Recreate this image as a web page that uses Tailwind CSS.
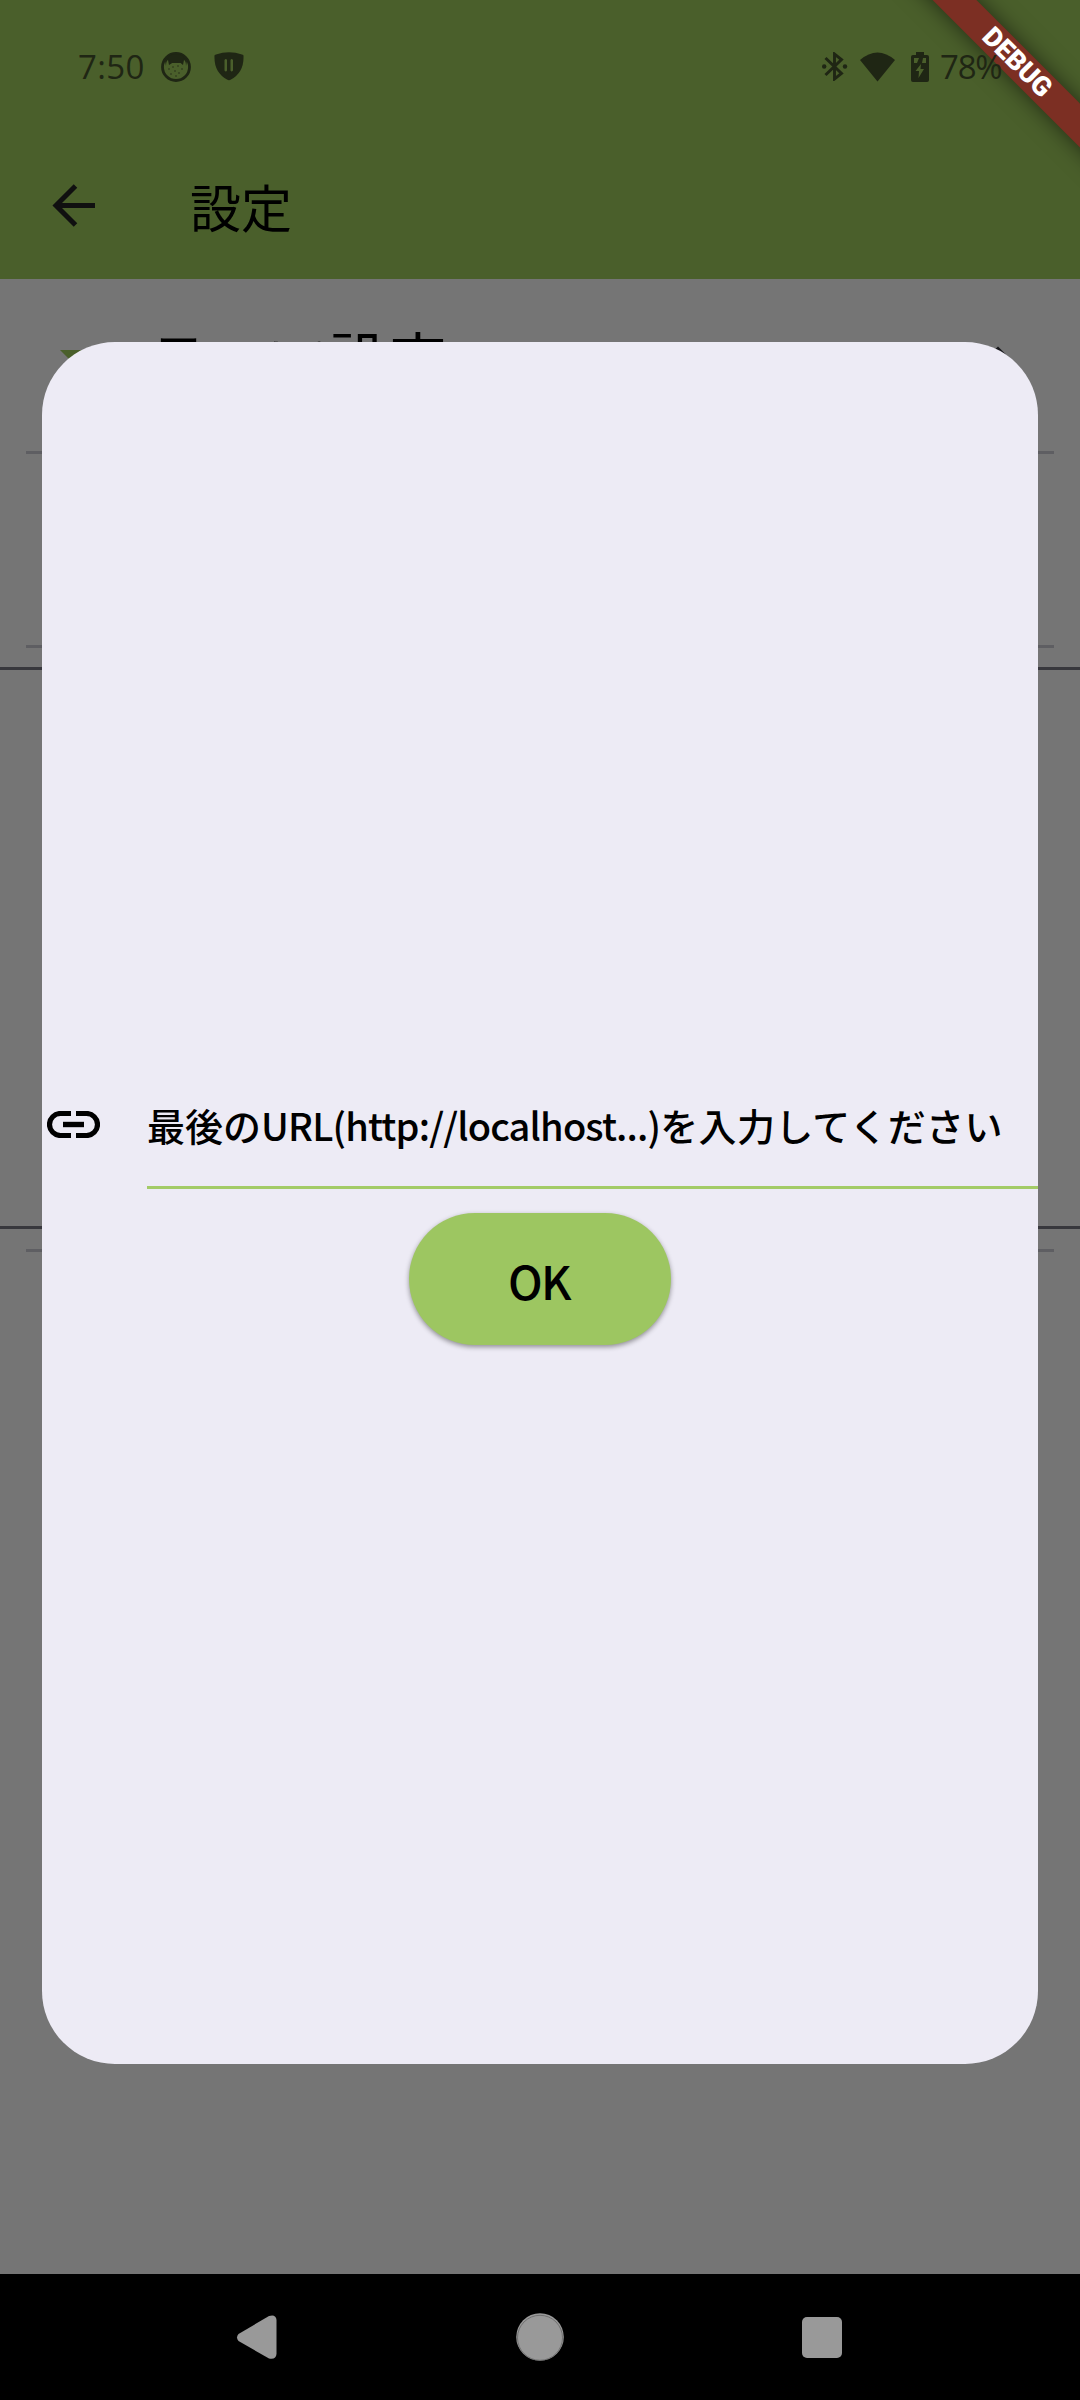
<!DOCTYPE html>
<html lang="ja">
<head>
<meta charset="utf-8">
<title>設定</title>
<script src="https://cdn.jsdelivr.net/npm/@tailwindcss/browser@4"></script>
</head>
<body class="relative flex h-[2400px] w-[1080px] flex-col overflow-hidden bg-[#757575] font-['Noto_Sans_CJK_JP',sans-serif] text-black">
<header class="relative h-[279px] shrink-0 bg-[#4a5f2b]">
  <!-- status bar -->
  <div class="relative z-20 flex h-[133px] items-center justify-between pl-[78px] pr-[77px] text-[33px] leading-none text-[#1f2614]">
    <div class="flex items-center">
      <span class="w-[83px] whitespace-nowrap font-['Open_Sans',sans-serif] font-medium tracking-[0.4px]">7:50</span>
      <svg class="h-[30px] w-[30px]" viewBox="0 0 30 30"><circle cx="15" cy="15" r="13.5" fill="none" stroke="currentColor" stroke-width="2.8"/><path d="M4 9Q8 2 15 2T26 9L25 14Q25 9 23 8L22 13L19 10.500H12L8 13L7 8Q5 9 5 14Z" fill="currentColor"/><path d="M7 5Q15-1 23 5L20 11H10Z" fill="currentColor"/><g fill="currentColor"><circle cx="8" cy="17" r=".7"/><circle cx="12" cy="15" r=".7"/><circle cx="17" cy="14" r=".7"/><circle cx="21" cy="17" r=".7"/><circle cx="14" cy="19" r=".7"/><circle cx="18" cy="21" r=".7"/><circle cx="10" cy="22" r=".7"/><circle cx="15" cy="24" r=".7"/></g></svg>
      <svg class="ml-[23px] h-[29px] w-[30px]" viewBox="0 0 30 29"><path fill="currentColor" fill-rule="evenodd" d="M.5 4.5Q0 3 2 2.500Q15-2 28 2.500Q30 3 29.500 4.500Q30 20 17 27.500Q15 29 13 27.500Q0 20 .5 4.500ZM10.500 8V18.500Q12 20.500 13 18.500V8Q12 6 10.500 8ZM16.500 8V18.500Q17.500 20.500 19 18.500V8Q17.500 6 16.500 8Z"/></svg>
    </div>
    <div class="flex items-center">
      <svg class="h-[29px] w-[26px]" viewBox="0 0 26 29"><path d="M3.500 6L19.500 21.500L12.500 27V2L19.500 7.500L3.500 23" fill="none" stroke="currentColor" stroke-width="2.900"/><circle cx="2.200" cy="14.500" r="2.200" fill="currentColor"/><circle cx="23" cy="14.500" r="2.200" fill="currentColor"/></svg>
      <svg class="ml-[12px] h-[30px] w-[35px]" viewBox="0 0 35 30"><path d="M0 8Q17.500-7 35 8L17.500 29.500Z" fill="currentColor"/></svg>
      <svg class="ml-[16px] h-[30px] w-[18px]" viewBox="0 0 18 30"><path fill="currentColor" fill-rule="evenodd" d="M5 0H13V3H16Q18 3 18 5V28Q18 30 16 30H2Q0 30 0 28V5Q0 3 2 3H5ZM3 6V11H6L8 6ZM12 6L11 11H15V6ZM10 12L4.500 19H8L7.500 26L13 17H9.500Z"/></svg>
      <span class="ml-[11px] w-[63px] whitespace-nowrap font-['Open_Sans',sans-serif] font-medium tracking-[-1.2px]">78%</span>
    </div>
  </div>
  <!-- app bar -->
  <div class="flex h-[146px] items-center pl-[52px]">
    <svg class="mt-[-2px] h-[43px] w-[43px]" viewBox="0 0 43 43"><path d="M43 21.500H4M23.500 2L4 21.500L23.500 41" fill="none" stroke="#101010" stroke-width="5"/></svg>
    <h1 class="ml-[95px] mt-[1px] text-[51px] leading-none">設定</h1>
  </div>
</header>
<main class="relative h-[1995px] shrink-0">
  <section class="flex h-[172px] items-center px-[52px]">
    <svg class="mt-[2px] h-8 w-[50px]" viewBox="0 0 50 32"><path d="M8 0H48L28 20Z" fill="#4a5f2b"/></svg>
    <h2 class="mb-[16px] ml-[46px] text-[60px] leading-none">テーマ設定</h2>
    <svg class="mb-[7px] ml-auto h-[40px] w-[60px]" viewBox="0 0 60 40"><path d="M15 23L30 8L45 23" fill="none" stroke="#17171b" stroke-width="5"/></svg>
  </section>
  <div class="mx-[26px] h-[3px] bg-[#5e5e62]"></div>
  <div class="mx-[26px] mt-[191px] h-[3px] bg-[#5e5e62]"></div>
  <div class="mt-[19px] h-[3px] bg-[#38383d]"></div>
  <div class="mt-[556px] h-[3px] bg-[#38383d]"></div>
  <div class="mx-[26px] mt-[20px] h-[3px] bg-[#5e5e62]"></div>
</main>
<nav class="flex h-[126px] shrink-0 items-center justify-between bg-black pl-[236px] pr-[238px]">
  <svg class="h-[46px] w-[41px]" viewBox="0 0 41 46"><path d="M2.500 20L33 2Q40 0 40.500 6V40Q40 46 33 44.500L2.500 27Q-.5 23.500 2.500 20Z" fill="#999"/></svg>
  <svg class="h-[48px] w-[48px]" viewBox="0 0 48 48"><circle cx="24" cy="24" r="23.800" fill="#999"/><circle cx="24" cy="24.800" r="22.500" fill="none" stroke="#666" stroke-width=".8"/></svg>
  <div class="h-[41px] w-[40px] rounded-[5px] bg-[#999]"></div>
</nav>
<!-- dialog -->
<div class="absolute left-[42px] top-[342px] flex h-[1722px] w-[996px] flex-col items-center overflow-hidden rounded-[73px] bg-[#edebf5] pt-[734px]">
  <div class="flex h-[113px] w-full">
    <svg class="ml-[5px] mt-[35px] h-[27px] w-[53px] shrink-0" viewBox="0 0 53 27"><path d="M24 2.500H13.500A11 11 0 0 0 13.500 24.500H24M29 2.500H39.500A11 11 0 0 1 39.500 24.500H29" fill="none" stroke="#000" stroke-width="5.200"/><path d="M16 13.500H37" stroke="#000" stroke-width="5.400"/></svg>
    <div class="ml-[47px] h-full min-w-0 flex-1 border-b-[3px] border-[#a3cb67] pt-[30px]">
      <p class="whitespace-nowrap text-[38px] font-medium leading-none">最後の<span class="tracking-[-0.83px]">URL(http://localhost...)</span><span class="tracking-[0.3px]">を入力してください</span></p>
    </div>
  </div>
  <button class="mt-[24px] flex h-[132px] w-[262px] shrink-0 items-center justify-center rounded-full bg-[#9dc661] pr-[2px] pt-[2px] text-[46px] font-medium leading-none tracking-[-1.5px] shadow-[0_2px_5px_rgba(0,0,0,0.4)]">OK</button>
</div>
<!-- debug ribbon -->
<div class="absolute right-0 top-0 z-10 h-[200px] w-[220px] overflow-hidden">
  <div class="absolute left-[7px] top-[47px] flex h-[31px] w-[300px] rotate-45 items-center justify-center bg-[#7c2f23] font-['Roboto',sans-serif] text-[27px] font-black leading-none text-white shadow-[0_0_22px_rgba(0,0,0,0.55)]"><span class="tracking-[-0.2px]">DEBUG</span></div>
</div>
</body>
</html>
